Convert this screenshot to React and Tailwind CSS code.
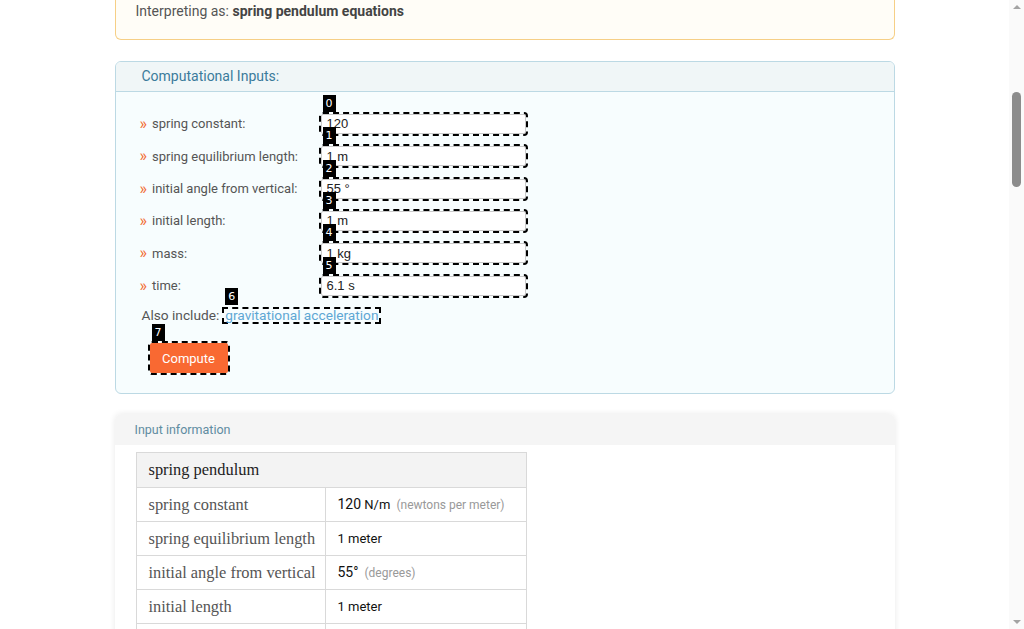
const inputs = [
  { label: "spring constant:", value: "120" },
  { label: "spring equilibrium length:", value: "1 m" },
  { label: "initial angle from vertical:", value: "55 °" },
  { label: "initial length:", value: "1 m" },
  { label: "mass:", value: "1 kg" },
  { label: "time:", value: "6.1 s" },
];

const rows = [
  { name: "spring constant", value: "120", unit: "N/m", note: "(newtons per meter)" },
  { name: "spring equilibrium length", value: "1 meter" },
  { name: "initial angle from vertical", value: "55°", note: "(degrees)" },
  { name: "initial length", value: "1 meter" },
  { name: "mass", value: "1 kg", note: "(kilogram)" },
];

function Badge({ n, className = "" }) {
  return (
    <span
      className={`absolute bottom-full flex h-[17px] min-w-[13px] items-center justify-center bg-black px-[3px] text-[11px] leading-none text-white ${className}`}
      style={{ fontFamily: '"DejaVu Sans", sans-serif' }}
    >
      {n}
    </span>
  );
}

function Scrollbar() {
  return (
    <aside className="flex h-[629px] w-[15px] shrink-0 flex-col items-center bg-[#fafafa]">
      <span className="mt-[5px] h-0 w-0 border-x-[4px] border-b-[4px] border-x-transparent border-b-[#a3a3a3]" />
      <span className="mt-[83px] h-[95px] w-[9px] rounded-full bg-[#8c8c8c]" />
      <span className="mt-auto mb-[5px] h-0 w-0 border-x-[4px] border-t-[4px] border-x-transparent border-t-[#a3a3a3]" />
    </aside>
  );
}

export default function App() {
  return (
    <div
      className="flex bg-white text-[#555]"
      style={{ fontFamily: 'Roboto, "Liberation Sans", sans-serif' }}
    >
      <main className="h-[629px] min-w-0 flex-1 overflow-hidden">
        <div className="mx-auto w-[780px]">
          {/* Interpretation (scrolled, top edge out of view) */}
          <div className="rounded-b-md border-x border-b border-[#f6cf86] bg-[#fffdf7] px-5 pt-[3px] pb-[19px] text-[14px] leading-[17px]">
            Interpreting as: <b className="text-[#444]">spring pendulum equations</b>
          </div>

          {/* Computational inputs */}
          <div className="mt-[21px] overflow-hidden rounded-md border border-[#bcd9e4] bg-[#f7fdfe]">
            <div className="flex h-[30px] items-center border-b border-[#bcd9e4] bg-[#f0f6f7] px-[26px] text-[14px] text-[#3b7b9b]">
              Computational Inputs:
            </div>
            <div className="px-6 pt-[16px] pb-[20px]">
              {inputs.map((item, i) => (
                <div key={item.label} className="flex h-[32.3px] items-center">
                  <div className="flex w-[181px] items-center text-[13px] text-[#555]">
                    <span className="mr-[5px] text-[16px] leading-none text-[#f26a2e]">»</span>
                    {item.label}
                  </div>
                  <div className="relative">
                    <Badge n={i} className="left-[2px] mb-[2px]" />
                    <div
                      className="flex h-[20px] w-[205px] items-center rounded-[2px] border border-[#c9c9c9] bg-white pl-[5px] text-[13px] text-[#222] outline-2 outline-dashed outline-black"
                      style={{ fontFamily: '"Liberation Sans", Arial, sans-serif' }}
                    >
                      {item.value}
                    </div>
                  </div>
                </div>
              ))}

              <div className="mt-[3px] flex items-center text-[13.7px] text-[#555]">
                <span className="ml-[2px]">Also include:</span>
                <span className="relative ml-[3px]">
                  <Badge n={6} className="left-[3px] mb-[2px]" />
                  <span className="block border-2 border-dashed border-black px-[1px] leading-[13px] text-[#5ea7d4]">
                    gravitational acceleration
                  </span>
                </span>
              </div>

              <div className="relative mt-[18px] ml-[10px] w-fit">
                <Badge n={7} className="left-[2px] mb-[2px]" />
                <button className="flex h-[30px] w-[78px] items-center justify-center rounded-[2px] bg-[#f96932] text-[13px] text-white outline-2 outline-dashed outline-black">
                  Compute
                </button>
              </div>
            </div>
          </div>

          {/* Input information */}
          <div className="mt-[20px] overflow-hidden rounded-t-md bg-white shadow-[0_0_6px_rgba(0,0,0,0.09)]">
            <div className="flex h-[31px] items-center bg-[#f5f5f5] px-5 pt-[1px] text-[12.5px] text-[#5f8ca1]">
              Input information
            </div>
            <div className="px-[21px] pt-[7px] pb-4">
              <table
                className="w-[390px] table-fixed border-collapse"
                style={{ fontFamily: '"Liberation Serif", serif' }}
              >
                <colgroup>
                  <col className="w-[189px]" />
                  <col className="w-[201px]" />
                </colgroup>
                <thead>
                  <tr>
                    <th
                      colSpan={2}
                      className="h-[35px] border border-[#d9d9d9] bg-[#f3f3f3] px-3 text-left text-[16.4px] font-normal text-[#222]"
                    >
                      spring pendulum
                    </th>
                  </tr>
                </thead>
                <tbody>
                  {rows.map((r) => (
                    <tr key={r.name}>
                      <td className="h-[34px] border border-[#d9d9d9] px-3 text-[16.4px] whitespace-nowrap text-[#555]">
                        {r.name}
                      </td>
                      <td
                        className="h-[34px] border border-[#d9d9d9] px-3 text-[13px] whitespace-nowrap text-[#111]"
                        style={{ fontFamily: 'Roboto, "Liberation Sans", sans-serif' }}
                      >
                        <span className={r.unit || r.note ? "text-[14px]" : ""}>{r.value}</span>
                        {r.unit && <span> {r.unit}</span>}
                        {r.note && <span className="ml-[6px] text-[12px] text-[#999]">{r.note}</span>}
                      </td>
                    </tr>
                  ))}
                </tbody>
              </table>
            </div>
          </div>
        </div>
      </main>
      <Scrollbar />
    </div>
  );
}
